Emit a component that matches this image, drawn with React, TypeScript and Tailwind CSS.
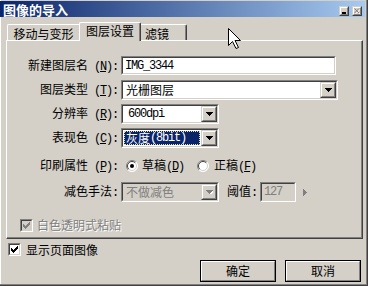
import React from "react";

function Asc({ children, className = "" }: { children: React.ReactNode; className?: string }) {
  return <span className={`font-['Liberation_Mono',monospace] text-[12px] tracking-[-1.2px] ${className}`}>{children}</span>;
}

function Key({ k, colon = true, space = true }: { k: string; colon?: boolean; space?: boolean }) {
  return (
    <Asc>
      {space ? "\u00a0(" : "("}
      <span className="underline underline-offset-1">{k}</span>
      {colon ? "):" : ")"}
    </Asc>
  );
}

function Sunken({ className = "", inner = "", children }: { className?: string; inner?: string; children?: React.ReactNode }) {
  return (
    <div className={`shrink-0 border border-t-[#808080] border-l-[#808080] border-r-white border-b-white ${className}`}>
      <div className={`h-full w-full border border-t-[#404040] border-l-[#404040] border-r-[#d4d0c8] border-b-[#d4d0c8] ${inner}`}>{children}</div>
    </div>
  );
}

function Raised({ className = "", inner = "", children }: { className?: string; inner?: string; children?: React.ReactNode }) {
  return (
    <div className={`shrink-0 border border-t-[#d4d0c8] border-l-[#d4d0c8] border-r-[#404040] border-b-[#404040] ${className}`}>
      <div className={`h-full w-full bg-[#d4d0c8] border border-t-white border-l-white border-r-[#808080] border-b-[#808080] ${inner}`}>{children}</div>
    </div>
  );
}

function Arrow({ color = "#000" }: { color?: string }) {
  return (
    <svg width="7" height="4" viewBox="0 0 7 4" shapeRendering="crispEdges">
      {color !== "#000" && <path d="M1 1h7v1h-1v1h-1v1h-1v1h-1v-1h-1v-1h-1v-1h-1z" fill="#fff" />}
      <path d="M0 0h7v1h-1v1h-1v1h-1v1h-1v-1h-1v-1h-1v-1h-1z" fill={color} />
    </svg>
  );
}

function Select({ w, value, disabled = false, highlighted = false }: { w: string; value: React.ReactNode; disabled?: boolean; highlighted?: boolean }) {
  return (
    <Sunken className={`${w} h-[20px]`} inner={disabled ? "bg-[#d4d0c8]" : "bg-white"}>
      <div className="flex h-full">
        <div className="flex-1 min-w-0 p-[1px]">
          <div
            className={`h-full flex items-center pl-[1px] border border-dotted ${
              highlighted ? "bg-[#0a246a] text-white border-[#e6e2a8]" : "border-transparent"
            } ${disabled ? "text-[#808080]" : ""}`}
          >
            {value}
          </div>
        </div>
        <Raised className="w-[16px] h-full" inner="flex items-center justify-center">
          <Arrow color={disabled ? "#808080" : "#000"} />
        </Raised>
      </div>
    </Sunken>
  );
}

function Radio({ checked }: { checked?: boolean }) {
  return (
    <svg width="12" height="12" viewBox="0 0 12 12" className="shrink-0">
      <circle cx="6" cy="6" r="5.5" fill="#fff" />
      <path d="M2.1 9.9 A5.5 5.5 0 0 1 9.9 2.1" fill="none" stroke="#808080" />
      <path d="M9.9 2.1 A5.5 5.5 0 0 1 2.1 9.9" fill="none" stroke="#fff" />
      <path d="M2.8 9.2 A4.5 4.5 0 0 1 9.2 2.8" fill="none" stroke="#404040" />
      <path d="M9.2 2.8 A4.5 4.5 0 0 1 2.8 9.2" fill="none" stroke="#d4d0c8" />
      {checked && <circle cx="6" cy="6" r="2" fill="#000" />}
    </svg>
  );
}

function Check({ disabled = false }: { disabled?: boolean }) {
  return (
    <Sunken className="w-[13px] h-[13px]" inner={`${disabled ? "bg-[#d4d0c8]" : "bg-white"} flex items-center justify-center`}>
      <svg width="7" height="7" viewBox="0 0 7 7" shapeRendering="crispEdges">
        <path d="M6 0h1v3h-1v1h-1v1h-1v1h-1v1h-1v-1h-1v-1h-1v-3h1v1h1v1h1v-1h1v-1h1z" fill={disabled ? "#808080" : "#000"} />
      </svg>
    </Sunken>
  );
}

function Row({ label, className = "", children }: { label: React.ReactNode; className?: string; children: React.ReactNode }) {
  return (
    <div className={`flex items-center shrink-0 ${className}`}>
      <div className="w-[114px] shrink-0 text-right pr-[3px] whitespace-nowrap">{label}</div>
      {children}
    </div>
  );
}

export default function App() {
  return (
    <div className="relative w-[368px] h-[286px] overflow-hidden bg-[#d4d0c8] border-r border-b border-r-[#404040] border-b-[#404040] shadow-[inset_-1px_-1px_0_#808080,inset_1px_0_0_#ffffff] text-[12px] leading-[12px] text-black font-['Noto_Sans_CJK_SC','Noto_Sans',sans-serif]">
      {/* title bar */}
      <div className="mt-[1px] mr-[2px] h-[16px] flex items-start bg-[linear-gradient(to_right,#0a246a,#a6caf0)]">
        <div className="pl-[3px] pt-[2px] text-white font-bold text-[13px] leading-[13px]">图像的导入</div>
        <div className="ml-auto flex gap-[3px] pr-[3px] pt-[5px]">
          <Raised className="w-[10px] h-[10px]" inner="flex items-end justify-center">
            <div className="w-[4px] h-[2px] bg-black" />
          </Raised>
          <Raised className="w-[10px] h-[10px]" inner="flex items-center justify-center">
            <svg width="6" height="6" viewBox="0 0 6 6">
              <path d="M1.5 1.5 L6 6 M6 1.5 L1.5 6" stroke="#fff" strokeWidth="1" />
              <path d="M0.5 0.5 L5 5 M5 0.5 L0.5 5" stroke="#808080" strokeWidth="1" />
            </svg>
          </Raised>
        </div>
      </div>

      {/* tabs */}
      <div className="h-[23px] flex items-end pl-[7px]">
        <div className="w-[72px] h-[16px] border-l border-t border-l-white border-t-white rounded-tl-[2px] flex justify-center pt-[3px] whitespace-nowrap">
          移动与变形
        </div>
        <div className="relative z-10 -mb-px w-[62px] h-[19px] bg-[#d4d0c8] border-l border-t border-r border-l-white border-t-white border-r-[#404040] shadow-[inset_-1px_0_0_#808080] rounded-t-[2px] flex justify-center pt-[2px] whitespace-nowrap">
          图层设置
        </div>
        <div className="w-[46px] h-[16px] border-t border-r border-t-white border-r-[#404040] shadow-[inset_-1px_0_0_#808080] rounded-tr-[2px] pl-[4px] pt-[3px] whitespace-nowrap">
          滤镜
        </div>
      </div>

      {/* panel */}
      <div className="ml-[6px] w-[357px] h-[199px] border border-t-white border-l-white border-r-[#404040] border-b-[#404040] shadow-[inset_-1px_-1px_0_#808080] flex flex-col">
        <Row className="mt-[15px] h-[19px]" label={<>新建图层名<Key k="N" /></>}>
          <Sunken className="w-[215px] h-[19px]" inner="bg-white flex items-center pl-[2px]">
            <Asc>IMG_3344</Asc>
          </Sunken>
        </Row>
        <Row className="mt-[5px] h-[20px]" label={<>图层类型<Key k="T" /></>}>
          <Select w="w-[217px]" value="光栅图层" />
        </Row>
        <Row className="mt-[4px] h-[20px]" label={<>分辨率<Key k="R" /></>}>
          <Select w="w-[98px]" value={<Asc className="pl-[2px]">600dpi</Asc>} />
        </Row>
        <Row className="mt-[4px] h-[20px]" label={<>表现色<Key k="C" /></>}>
          <Select w="w-[98px]" highlighted value={<>灰度<Asc>(8bit)</Asc></>} />
        </Row>
        <Row className="mt-[8px] h-[20px]" label={<>印刷属性<Key k="P" /></>}>
          <div className="ml-[5px] flex items-center">
            <Radio checked />
            <span className="ml-[4px]">草稿<Key k="D" colon={false} space={false} /></span>
            <span className="ml-[13px]"><Radio /></span>
            <span className="ml-[5px]">正稿<Key k="F" colon={false} space={false} /></span>
          </div>
        </Row>
        <Row className="mt-[6px] h-[20px]" label={<>减色手法<Asc>:</Asc></>}>
          <Select w="w-[98px]" disabled value="不做减色" />
          <span className="ml-[8px] whitespace-nowrap">阈值<Asc>:</Asc></span>
          <Sunken className="ml-[3px] w-[36px] h-[20px]" inner="bg-[#d4d0c8] flex items-center pl-[2px]">
            <Asc className="text-[#808080]">127</Asc>
          </Sunken>
          <svg width="4" height="7" viewBox="0 0 4 7" className="ml-[7px]" shapeRendering="crispEdges">
            <path d="M0 0h1v1h1v1h1v1h1v1h-1v1h-1v1h-1v1h-1z" fill="#808080" />
          </svg>
        </Row>
        <div className="mt-[13px] h-[20px] flex items-center pl-[13px]">
          <Check disabled />
          <span className="ml-[4px] text-[#808080] [text-shadow:1px_1px_0_#ffffff]">白色透明式粘贴</span>
        </div>
      </div>

      {/* show page image */}
      <div className="mt-[4px] h-[13px] flex items-center pl-[8px]">
        <Check />
        <span className="ml-[5px]">显示页面图像</span>
      </div>

      {/* buttons */}
      <div className="mt-[4px] flex justify-end gap-[9px] pr-[6px]">
        {["确定", "取消"].map((t) => (
          <div key={t} className="w-[76px] h-[22px] border border-black">
            <div className="h-full w-full border border-t-white border-l-white border-r-[#808080] border-b-[#808080] flex items-center justify-center">
              {t}
            </div>
          </div>
        ))}
      </div>

      {/* mouse pointer */}
      <svg width="13" height="21" viewBox="0 0 13 21" className="absolute left-[228px] top-[28px]">
        <path d="M0.5 0.5 V17.5 L4.5 13.5 L8 20.5 L10.5 19.5 L7 12.5 H12.5 Z" fill="#fff" stroke="#000" strokeWidth="1" />
      </svg>
    </div>
  );
}
